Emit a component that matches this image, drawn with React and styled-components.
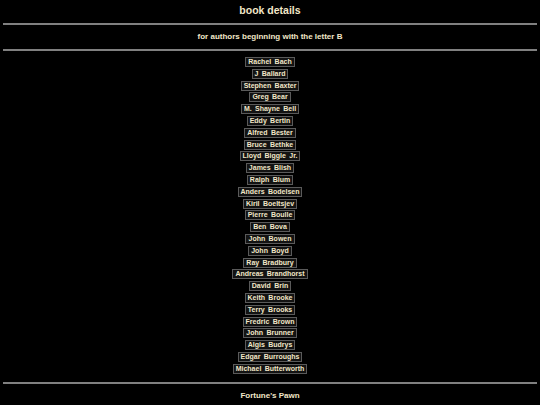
import React from 'react';
import styled, { createGlobalStyle } from 'styled-components';

const authors = [
  'Rachel Bach',
  'J Ballard',
  'Stephen Baxter',
  'Greg Bear',
  'M. Shayne Bell',
  'Eddy Bertin',
  'Alfred Bester',
  'Bruce Bethke',
  'Lloyd Biggle Jr.',
  'James Blish',
  'Ralph Blum',
  'Anders Bodelsen',
  'Kiril Boeltsjev',
  'Pierre Boulle',
  'Ben Bova',
  'John Bowen',
  'John Boyd',
  'Ray Bradbury',
  'Andreas Brandhorst',
  'David Brin',
  'Keith Brooke',
  'Terry Brooks',
  'Fredric Brown',
  'John Brunner',
  'Algis Budrys',
  'Edgar Burroughs',
  'Michael Butterworth',
];

const GlobalStyle = createGlobalStyle`
  html, body {
    margin: 0;
    padding: 0;
    background: #000;
  }
  body {
    font-family: "Liberation Sans", Arial, sans-serif;
    color: #f2e7c8;
  }
`;

const Page = styled.div`
  display: flex;
  flex-direction: column;
  align-items: stretch;
  padding: 4px 3px 0;
`;

const Title = styled.div`
  font-size: 10.5px;
  line-height: 12px;
  font-weight: bold;
  text-align: center;
`;

const SubTitle = styled.div`
  font-size: 8px;
  line-height: 10px;
  font-weight: bold;
  text-align: center;
`;

const Rule = styled.div`
  height: 2px;
  background: #808080;
  margin: ${p => p.$top}px 0 ${p => p.$bottom}px;
`;

const List = styled.div`
  display: flex;
  flex-direction: column;
  align-items: center;
  gap: 1.8px;
`;

const Author = styled.a`
  display: block;
  font-size: 7px;
  line-height: 8px;
  font-weight: bold;
  word-spacing: 1.4px;
  padding: 0 2px;
  border: 1px solid #5a5a5a;
  background: #131313;
  color: inherit;
  text-decoration: none;
  white-space: nowrap;
`;

const Footer = styled.div`
  font-size: 8px;
  line-height: 10px;
  font-weight: bold;
  text-align: center;
`;

export default function App() {
  return (
    <>
      <GlobalStyle />
      <Page>
        <Title>book details</Title>
        <Rule $top={7} $bottom={7} />
        <SubTitle>for authors beginning with the letter B</SubTitle>
        <Rule $top={7} $bottom={6} />
        <List>
          {authors.map(name => (
            <Author key={name} href="#">
              {name}
            </Author>
          ))}
        </List>
        <Rule $top={8} $bottom={7} />
        <Footer>Fortune's Pawn</Footer>
      </Page>
    </>
  );
}
